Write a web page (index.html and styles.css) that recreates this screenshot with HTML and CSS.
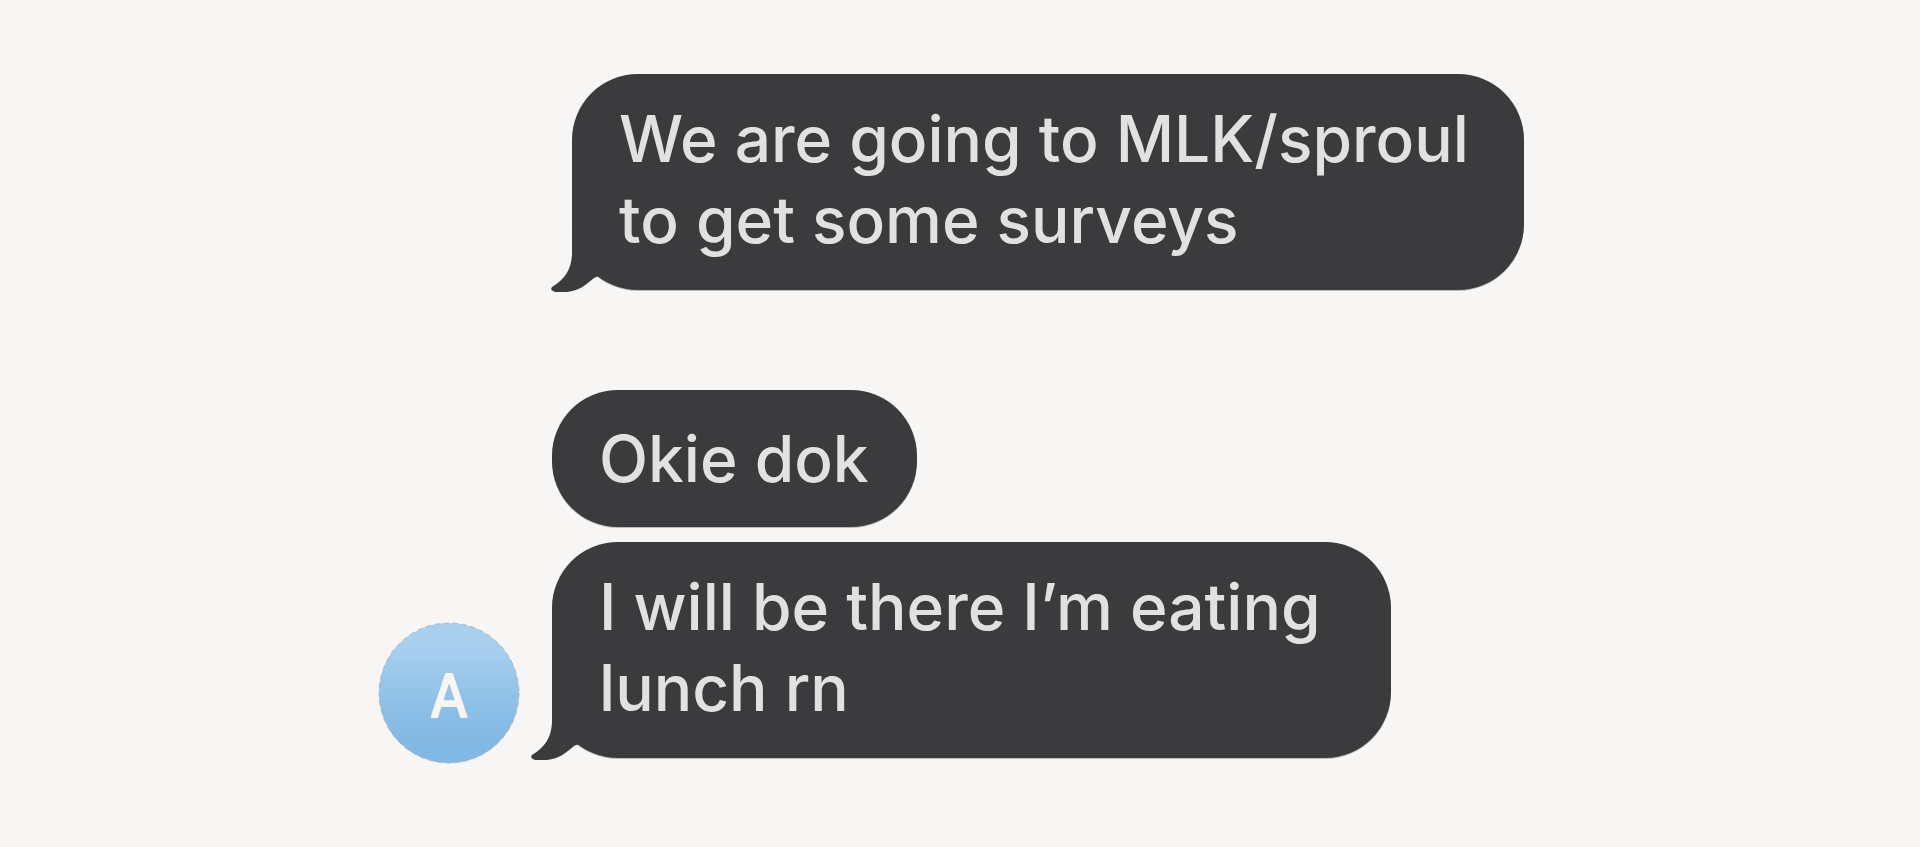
FILE: index.html
```html
<!DOCTYPE html>
<html lang="en">
<head>
    <meta charset="UTF-8">
    <meta name="viewport" content="width=device-width, initial-scale=1.0">
    <title>Messages</title>
    <link rel="stylesheet" href="styles.css">
</head>
<body>
    <main class="chat">
        <div class="message-group">
            <div class="bubbles">
                <p class="bubble long">
                    We are going to MLK/sproul<br>to get some surveys
                    <svg class="tail" viewBox="0 0 52 66" aria-hidden="true">
                        <path d="M21 0V28C20 43 14 52 1 60Q-1 63 2 64L4 65H16C28 64 36 57 43 51Q47 48 51 51L52 42V0Z"/>
                    </svg>
                </p>
            </div>
        </div>

        <div class="message-group">
            <svg class="avatar" viewBox="0 0 142 142" role="img" aria-label="A">
                <defs>
                    <linearGradient id="sky" x1="0" y1="0" x2="0" y2="1">
                        <stop offset="0.15" stop-color="#a9cfef"/>
                        <stop offset="0.5" stop-color="#92c3e8"/>
                        <stop offset="0.85" stop-color="#82b8e4"/>
                    </linearGradient>
                </defs>
                <circle class="avatar-ring" cx="71" cy="71" r="70"/>
                <text class="avatar-letter" x="71" y="95">A</text>
            </svg>
            <div class="bubbles">
                <p class="bubble">Okie dok</p>
                <p class="bubble long">
                    I will be there I’m eating<br>lunch rn
                    <svg class="tail" viewBox="0 0 52 66" aria-hidden="true">
                        <path d="M21 0V28C20 43 14 52 1 60Q-1 63 2 64L4 65H16C28 64 36 57 43 51Q47 48 51 51L52 42V0Z"/>
                    </svg>
                </p>
            </div>
        </div>
    </main>
</body>
</html>
```
FILE: styles.css
```css
body {
    margin: 0;
    background-color: #f7f6f4;
    font-family: Inter, "Liberation Sans", sans-serif;
}

.chat {
    display: flex;
    flex-direction: column;
    gap: 100px;
    max-width: 1164px;
    margin: 0 auto;
    padding: 74px 0;
}

.message-group {
    display: flex;
    align-items: flex-end;
    gap: 32px;
}

.message-group:first-child {
    padding-left: 194px;
}

.bubbles {
    display: flex;
    flex-direction: column;
    align-items: flex-start;
    gap: 15px;
}

.message-group:last-child .bubbles {
    padding-bottom: 6px;
}

.bubble {
    position: relative;
    box-sizing: border-box;
    max-width: 952px;
    margin: 0;
    padding: 28px 48px 28px 47px;
    border-radius: 66px;
    background-color: #3b3b3d;
    box-shadow: 0 1px 0 #bdbebf;
    color: #e1e1e1;
    font-size: 64px;
    font-weight: 500;
    line-height: 81px;
    white-space: nowrap;
}

.bubble.long {
    padding: 24px 70px 30px 47px;
}

.tail {
    position: absolute;
    left: -21px;
    bottom: -3px;
    width: 52px;
    height: 66px;
    fill: #3b3b3d;
}

.avatar {
    flex: none;
    width: 142px;
    height: 142px;
}

.avatar-ring {
    fill: url(#sky);
    stroke: #b3b8bc;
    stroke-width: 1px;
    stroke-dasharray: 5 4;
}

.avatar-letter {
    fill: #f7f6f4;
    stroke: #f7f6f4;
    stroke-width: 2px;
    stroke-linejoin: round;
    font-family: "DejaVu Sans Condensed", "DejaVu Sans", sans-serif;
    font-size: 58px;
    text-anchor: middle;
}
```
